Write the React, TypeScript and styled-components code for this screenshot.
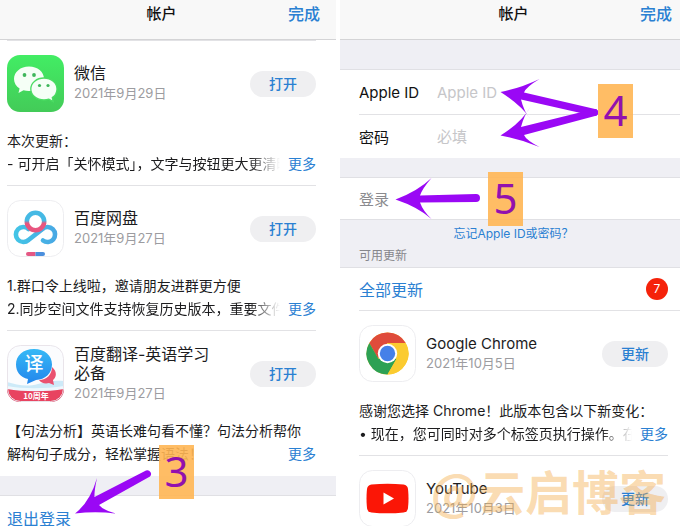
import React from "react";
import styled, { createGlobalStyle, css } from "styled-components";

const BLUE = "#2a80d2";
const GRAY = "#efeff4";
const LINE = "#e2e2e5";

const GlobalStyle = createGlobalStyle`
  * { box-sizing: border-box; }
  body {
    margin: 0;
    background: #fff;
    color: #1c1c1e;
    font-family: Inter, "Noto Sans CJK SC", sans-serif;
  }
  button, input { font: inherit; border: 0; padding: 0; background: none; }
  h1, h2, p { margin: 0; font-weight: 400; }
`;

const Page = styled.main`
  display: grid;
  grid-template-columns: 336fr 340fr;
  gap: 4px;
  height: 100vh;
  overflow: hidden;
`;

const Pane = styled.section<{ $left: number; $right: number }>`
  --left: ${(p) => p.$left}px;
  --right: ${(p) => p.$right}px;
  position: relative;
  min-width: 0;
`;

const NavBar = styled.header`
  display: grid;
  grid-template-columns: 1fr auto 1fr;
  align-items: start;
  height: 40px;
  padding: 2px calc(var(--right) - 4px) 0 calc(var(--left) - 4px);
  background: #f8f8f8;
  border-bottom: 1px solid #d4d4d6;
  line-height: 24px;
`;

const NavTitle = styled.h1`
  grid-column: 2;
  font-size: 15px;
  font-weight: 500;
  line-height: 24px;
  color: #111;
`;

const NavAction = styled.button`
  justify-self: end;
  font-size: 16px;
  line-height: 24px;
  font-weight: 500;
  color: ${BLUE};
`;

const List = styled.div`
  padding: 0 var(--right) 0 var(--left);
`;

const FirstRule = styled.div`
  height: 1px;
  background: ${LINE};
`;

const AppItem = styled.article`
  padding: 14px 0 10px;
  border-bottom: 1px solid ${LINE};
  &:last-child { border-bottom-color: transparent; }
`;

const AppHead = styled.div`
  display: flex;
  align-items: center;
  gap: 10px;
  height: 57px;
`;

const AppIcon = styled.svg`
  flex: none;
  width: 57px;
  height: 57px;
`;

const AppText = styled.div`
  flex: 1;
  min-width: 0;
`;

const AppName = styled.h2`
  max-width: 144px;
  font-size: 15px;
  line-height: 19px;
  color: #1c1c1e;
  &:lang(zh) { font-size: 16px; }
`;

const AppDate = styled.p`
  font-size: 13px;
  line-height: 20px;
  color: #9c9ca0;
`;

const Pill = styled.button`
  flex: none;
  width: 66px;
  height: 26px;
  border-radius: 13px;
  background: #efeff1;
  color: ${BLUE};
  font-size: 14px;
  font-weight: 500;
  line-height: 24px;
`;

const Notes = styled.div`
  padding-top: 17px;
  font-size: 14px;
  line-height: 23px;
  white-space: nowrap;
`;

const LastLine = styled.div`
  display: flex;
  gap: 8px;
`;

const Clipped = styled.p<{ $fade?: boolean }>`
  flex: 1;
  min-width: 0;
  overflow: hidden;
  ${(p) =>
    p.$fade &&
    css`
      mask-image: linear-gradient(to left, transparent, #000 30px);
    `}
`;

const More = styled.button`
  flex: none;
  line-height: 23px;
  color: ${BLUE};
`;

const Band = styled.div<{ $height: number }>`
  height: ${(p) => p.$height}px;
  background: ${GRAY};
  border-bottom: 1px solid #e0e0e4;
`;

const TextRow = styled.button<{ $muted?: boolean }>`
  display: block;
  width: 100%;
  height: ${(p) => (p.$muted ? 41 : 44)}px;
  padding: 0 var(--right) 0 var(--left);
  text-align: left;
  font-size: ${(p) => (p.$muted ? 15 : 16)}px;
  color: ${(p) => (p.$muted ? "#8a8a8e" : BLUE)};
`;

const Field = styled.label`
  display: flex;
  align-items: center;
  height: 44px;
  margin-left: var(--left);
  font-size: 15px;
  & + & { border-top: 1px solid ${LINE}; }
`;

const FieldName = styled.span`
  flex: none;
  width: 78px;
  color: #111;
`;

const FieldInput = styled.input`
  flex: 1;
  min-width: 0;
  outline: 0;
  &::placeholder { color: #c6c6c9; opacity: 1; }
`;

const Middle = styled.div`
  height: 49px;
  padding: 3px var(--right) 0 var(--left);
  background: ${GRAY};
  border-top: 1px solid #e0e0e4;
  border-bottom: 1px solid #e0e0e4;
  font-size: 12px;
  line-height: 22px;
`;

const Forgot = styled.a`
  display: block;
  text-align: center;
  text-decoration: none;
  color: ${BLUE};
`;

const Caption = styled.p`
  color: #86868b;
`;

const UpdateAll = styled.div`
  display: flex;
  align-items: center;
  justify-content: space-between;
  height: 43px;
  margin-left: var(--left);
  padding-right: var(--right);
  border-bottom: 1px solid ${LINE};
`;

const UpdateAllButton = styled.button`
  font-size: 16px;
  color: ${BLUE};
`;

const Count = styled.span`
  width: 22px;
  height: 22px;
  border-radius: 50%;
  background: #f5220a;
  color: #fff;
  font-size: 12px;
  line-height: 22px;
  text-align: center;
`;

const Step = styled.span<{ $x: number; $y: number }>`
  position: absolute;
  left: ${(p) => p.$x}px;
  top: ${(p) => p.$y}px;
  width: 35px;
  height: 54px;
  background: rgba(255, 182, 84, 0.9);
  color: #9210ae;
  font: 42px/52px "Noto Sans", sans-serif;
  text-align: center;
`;

const Arrows = styled.svg`
  position: absolute;
  left: 0;
  top: 0;
  width: 336px;
  height: 526px;
  pointer-events: none;
  fill: #9a08f5;
`;

const Watermark = styled.span`
  position: absolute;
  right: 14px;
  top: 462px;
  font: 700 47px/56px "Noto Sans CJK SC", sans-serif;
  color: rgba(244, 170, 70, 0.42);
  white-space: nowrap;
  pointer-events: none;
`;

const WeChatIcon = () => (
  <AppIcon viewBox="0 0 57 57" aria-hidden>
    <defs>
      <linearGradient id="wx" x1="0" y1="0" x2="0" y2="1">
        <stop offset="0" stopColor="#42ed64" />
        <stop offset="1" stopColor="#43cb58" />
      </linearGradient>
    </defs>
    <rect width="57" height="57" rx="13" fill="url(#wx)" />
    <path d="M22 11.500C13.500 11.500 7 17 7 24c0 4 2.200 7.300 5.600 9.500L11.500 38l5-2.700c1.700.5 3.500.8 5.500.8 8.500 0 15-5.400 15-12.300S30.500 11.500 22 11.500Z" fill="#f5fff6" />
    <path d="M37 23c-7.300 0-13.200 4.800-13.200 11S29.700 45 37 45c1.800 0 3.400-.3 4.900-.8l4.300 2.400-.9-4C48.300 40.600 50 37.500 50 34c0-6.200-5.700-11-13-11Z" fill="#f5fff6" stroke="#4bdc63" strokeWidth="1.300" />
    <g fill="#3fb75b">
      <circle cx="17.500" cy="20" r="1.900" />
      <circle cx="27" cy="20" r="1.900" />
      <circle cx="32.500" cy="30.500" r="1.600" />
      <circle cx="41" cy="30.500" r="1.600" />
    </g>
  </AppIcon>
);

const Tile = () => <rect x="0.500" y="0.500" width="56" height="56" rx="13" fill="#fff" stroke="#ededf0" />;

const NetdiskIcon = () => (
  <AppIcon viewBox="0 0 57 57" aria-hidden>
    <defs>
      <linearGradient id="ndL" x1="0" y1="0" x2="1" y2="0">
        <stop offset="0" stopColor="#43c4e6" />
        <stop offset="1" stopColor="#48a9e4" />
      </linearGradient>
      <linearGradient id="ndT" x1="0" y1="0" x2="0" y2="1">
        <stop offset="0.450" stopColor="#45b9e4" />
        <stop offset="0.600" stopColor="#e8557f" />
      </linearGradient>
    </defs>
    <Tile />
    <g fill="none" strokeWidth="4.600" strokeLinecap="round">
      <path d="M36 40.500A7.500 7.500 0 1 0 35.500 29L21.500 40A7.500 7.500 0 1 1 21.500 29" stroke="url(#ndL)" />
      <circle cx="28.500" cy="21.500" r="8.700" fill="#fff" stroke="url(#ndT)" />
    </g>
    <path d="M21 52h7.500v4H21a2 2 0 0 1 0-4Z" fill="#e45884" />
    <path d="M28.500 52H36a2 2 0 0 1 0 4h-7.500Z" fill="#4a8fdd" />
  </AppIcon>
);

const TranslateIcon = () => (
  <AppIcon viewBox="0 0 57 57" aria-hidden>
    <defs>
      <clipPath id="trClip"><rect width="57" height="57" rx="13" /></clipPath>
      <linearGradient id="trB" x1="0" y1="0" x2="0" y2="1">
        <stop offset="0" stopColor="#36b9f6" />
        <stop offset="1" stopColor="#2386ec" />
      </linearGradient>
    </defs>
    <g clipPath="url(#trClip)">
      <rect width="57" height="57" fill="#fbfcfe" />
      <path d="M0 37c10 3 20 5 31 2 10-3 18-4 26-3v21H0Z" fill="#cdeaf8" />
      <path d="M0 41c16 3 38 3 57 0v16H0Z" fill="#eef8fd" />
      <path d="M45 22c6 5 4 11 1 13l1 5-5-2c-4 1-8 0-10-3 8 0 13-6 13-13Z" fill="#ea5270" />
      <path d="M27 4c11 0 18 6.500 18 15.500S38 34.500 29 35l-9 4 1-5C13 32.500 9 26.500 9 19.500 9 10.500 16 4 27 4Z" fill="url(#trB)" />
      <path d="M0 44c17 3 40 3 57 0v13H0Z" fill="#e84360" />
      <rect x="0.500" y="0.500" width="56" height="56" rx="13" fill="none" stroke="#e9e4ea" />
    </g>
    <g fill="#fff" textAnchor="middle" fontFamily="Noto Sans CJK SC, sans-serif">
      <text x="27" y="26" fontSize="19" fontWeight="500">译</text>
      <text x="29" y="54" fontSize="8" fontWeight="700">10周年</text>
    </g>
  </AppIcon>
);

const ChromeIcon = () => (
  <AppIcon viewBox="0 0 57 57" aria-hidden>
    <Tile />
    <circle cx="28.500" cy="28.500" r="21" fill="#fbcb30" />
    <path d="M10.300 18A21 21 0 0 1 46.700 18H28.500L19 33.500Z" fill="#df4b3b" />
    <path d="M10.300 18A21 21 0 0 0 28.500 49.500L37.600 33.800 19.400 33.800Z" fill="#2da154" />
    <path d="M46.700 18H28.500L37.600 33.800 28.500 49.500A21 21 0 0 0 46.700 18Z" fill="#fbcb30" />
    <circle cx="28.500" cy="28.500" r="9.700" fill="#fff" />
    <circle cx="28.500" cy="28.500" r="7.700" fill="#4680e8" />
  </AppIcon>
);

const YouTubeIcon = () => (
  <AppIcon viewBox="0 0 57 57" aria-hidden>
    <Tile />
    <path d="M12.500 14.500Q28.500 12.800 44.500 14.500Q48.500 15 49 19Q50 28.500 49 38Q48.500 42 44.500 42.500Q28.500 44.200 12.500 42.500Q8.500 42 8 38Q7 28.500 8 19Q8.500 15 12.500 14.500Z" fill="#fb1606" />
    <path d="M24.500 22.500 35 28.500l-10.500 6Z" fill="#fff" />
  </AppIcon>
);

type Entry = {
  icon: React.ReactNode;
  name: string;
  latin?: boolean;
  date: string;
  action: string;
  notes?: [string, string];
  fade?: boolean;
};

const AppEntry = ({ icon, name, latin, date, action, notes, fade }: Entry) => (
  <AppItem>
    <AppHead>
      {icon}
      <AppText>
        <AppName lang={latin ? "en" : "zh"}>{name}</AppName>
        <AppDate>{date}</AppDate>
      </AppText>
      <Pill type="button">{action}</Pill>
    </AppHead>
    {notes && (
      <Notes>
        <p>{notes[0]}</p>
        <LastLine>
          <Clipped $fade={fade}>{notes[1]}</Clipped>
          <More type="button">更多</More>
        </LastLine>
      </Notes>
    )}
  </AppItem>
);

const installed: Entry[] = [
  { icon: <WeChatIcon />, name: "微信", date: "2021年9月29日", action: "打开", notes: ["本次更新：", "- 可开启「关怀模式」，文字与按钮更大更清晰"], fade: true },
  { icon: <NetdiskIcon />, name: "百度网盘", date: "2021年9月27日", action: "打开", notes: ["1.群口令上线啦，邀请朋友进群更方便", "2.同步空间文件支持恢复历史版本，重要文件"], fade: true },
  { icon: <TranslateIcon />, name: "百度翻译-英语学习必备", date: "2021年9月27日", action: "打开", notes: ["【句法分析】英语长难句看不懂？句法分析帮你", "解构句子成分，轻松掌握语法！"] },
];

const updates: Entry[] = [
  { icon: <ChromeIcon />, name: "Google Chrome", latin: true, date: "2021年10月5日", action: "更新", notes: ["感谢您选择 Chrome！此版本包含以下新变化：", "• 现在，您可同时对多个标签页执行操作。在标"], fade: true },
  { icon: <YouTubeIcon />, name: "YouTube", latin: true, date: "2021年10月3日", action: "更新" },
];

const Nav = () => (
  <NavBar>
    <NavTitle>帐户</NavTitle>
    <NavAction type="button">完成</NavAction>
  </NavBar>
);

export default function App() {
  return (
    <>
      <GlobalStyle />
      <Page lang="zh-CN">
        <Pane $left={7} $right={20}>
          <Nav />
          <List>
            <FirstRule />
            {installed.map((e) => <AppEntry key={e.name} {...e} />)}
          </List>
          <Band $height={20} />
          <TextRow type="button">退出登录</TextRow>
          <Step $x={159} $y={445}>3</Step>
          <Arrows viewBox="0 0 336 526" aria-hidden>
            <path d="M75 513.500Q90 502 97 478Q94 492 94.500 497L146 470.500A3.700 3.700 0 0 1 150 476.500L99 505Q103 510 116 513.500Q95 511 75 513.500Z" />
          </Arrows>
        </Pane>

        <Pane $left={19} $right={12}>
          <Nav />
          <Band $height={30} />
          <Field>
            <FieldName>Apple ID</FieldName>
            <FieldInput type="text" placeholder="Apple ID" />
          </Field>
          <Field>
            <FieldName>密码</FieldName>
            <FieldInput type="password" placeholder="必填" />
          </Field>
          <Band $height={20} />
          <TextRow type="button" $muted>登录</TextRow>
          <Middle>
            <Forgot href="#">忘记Apple ID或密码？</Forgot>
            <Caption>可用更新</Caption>
          </Middle>
          <UpdateAll>
            <UpdateAllButton type="button">全部更新</UpdateAllButton>
            <Count>7</Count>
          </UpdateAll>
          <List>
            {updates.map((e) => <AppEntry key={e.name} {...e} />)}
          </List>
          <Arrows viewBox="0 0 336 526" aria-hidden>
            <path d="M160.500 92Q181 88 199.500 79Q186 87 184 92.500L255 109A3.500 3.500 0 0 1 254 116L181 99.500Q184 112 190.500 119Q181 105 160.500 92Z" />
            <path d="M160.500 135.500Q181 139 199.500 147Q186 140 184 135L255 116A3.500 3.500 0 0 0 254 109L181 127Q184 115 190.500 107Q181 123 160.500 135.500Z" />
            <path d="M55.500 199.500Q78 191 91.500 178Q82 189 80 195.500L136 194A4 4 0 0 1 136 202L80 202.500Q83 211 91.500 219Q78 207 55.500 199.500Z" />
          </Arrows>
          <Step $x={258} $y={84}>4</Step>
          <Step $x={148} $y={172}>5</Step>
          <Watermark>@云启博客</Watermark>
        </Pane>
      </Page>
    </>
  );
}
